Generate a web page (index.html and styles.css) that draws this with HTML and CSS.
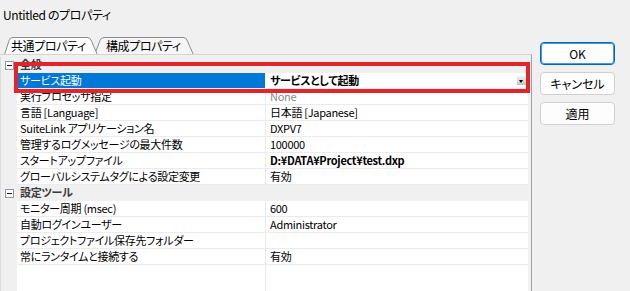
FILE: index.html
```html
<!DOCTYPE html>
<html lang="ja">
  <head>
    <meta charset="UTF-8" />
    <title>Untitled のプロパティ</title>
    <link rel="stylesheet" href="styles.css">
  </head>
  <body>
    <div class="title">Untitled のプロパティ</div>
    <div class="main">
      <div class="sheet">
        <div class="tabs">
          <div class="tab active">
            <svg width="94" height="18" viewBox="0 0 94 18">
              <path d="M0.5,18 L5,3.5 Q6,0.5 9,0.5 L83,0.5 Q86,0.5 87,3 L93.5,18" fill="#fdfdfd" stroke="#8c8c8c" />
            </svg>
            <span>共通プロパティ</span>
          </div>
          <div class="tab other">
            <svg width="100" height="18" viewBox="0 0 100 18">
              <path d="M0.5,18 L6,3.5 Q7,0.5 10,0.5 L89,0.5 Q92,0.5 93,3 L99.5,18" fill="#f6f6f6" stroke="#8c8c8c" />
            </svg>
            <span>構成プロパティ</span>
          </div>
        </div>
        <div class="panel">
          <div class="grid">
            <div class="row cat">
              <div class="gutter"><span class="toggle"></span></div>
              <div class="label">全般</div>
            </div>
            <div class="row">
              <div class="gutter"></div>
              <div class="name sel">サービス起動</div>
              <div class="value combo"><b>サービスとして起動</b><span class="drop"></span></div>
            </div>
            <div class="row">
              <div class="gutter"></div>
              <div class="name">実行プロセッサ指定</div>
              <div class="value muted">None</div>
            </div>
            <div class="row">
              <div class="gutter"></div>
              <div class="name">言語 [Language]</div>
              <div class="value">日本語 [Japanese]</div>
            </div>
            <div class="row">
              <div class="gutter"></div>
              <div class="name">SuiteLink アプリケーション名</div>
              <div class="value">DXPV7</div>
            </div>
            <div class="row">
              <div class="gutter"></div>
              <div class="name">管理するログメッセージの最大件数</div>
              <div class="value">100000</div>
            </div>
            <div class="row">
              <div class="gutter"></div>
              <div class="name">スタートアップファイル</div>
              <div class="value"><b>D:¥DATA¥Project¥test.dxp</b></div>
            </div>
            <div class="row">
              <div class="gutter"></div>
              <div class="name">グローバルシステムタグによる設定変更</div>
              <div class="value">有効</div>
            </div>
            <div class="row cat">
              <div class="gutter"><span class="toggle"></span></div>
              <div class="label">設定ツール</div>
            </div>
            <div class="row">
              <div class="gutter"></div>
              <div class="name">モニター周期 (msec)</div>
              <div class="value">600</div>
            </div>
            <div class="row">
              <div class="gutter"></div>
              <div class="name">自動ログインユーザー</div>
              <div class="value">Administrator</div>
            </div>
            <div class="row">
              <div class="gutter"></div>
              <div class="name">プロジェクトファイル保存先フォルダー</div>
              <div class="value"></div>
            </div>
            <div class="row">
              <div class="gutter"></div>
              <div class="name">常にランタイムと接続する</div>
              <div class="value">有効</div>
            </div>
            <div class="row filler">
              <div class="gutter"></div>
              <div class="name"></div>
              <div class="value"></div>
            </div>
            <div class="highlight"></div>
          </div>
        </div>
      </div>
      <div class="buttons">
        <button class="default">OK</button>
        <button>キャンセル</button>
        <button>適用</button>
      </div>
    </div>
  </body>
</html>
```

FILE: styles.css
```css
/* Base */
* {
  box-sizing: border-box;
  margin: 0;
  padding: 0;
}

body {
  width: 630px;
  height: 291px;
  overflow: hidden;
  background-color: #f0f0f0;
  color: #000;
  font-family: "Noto Sans CJK JP", "Noto Sans", sans-serif;
  font-feature-settings: "palt";
}

/* Title */
.title {
  height: 37px;
  padding: 8px 0 0 3px;
  font-size: 12px;
  line-height: 14px;
  letter-spacing: -0.4px;
}

.main {
  display: flex;
  height: 254px;
}

/* Tabs */
.sheet {
  width: 532px;
  display: flex;
  flex-direction: column;
}

.tabs {
  display: flex;
  height: 17px;
  padding-left: 4px;
}

.tab {
  position: relative;
  height: 17px;
  font-size: 12px;
  line-height: 17px;
  letter-spacing: -0.4px;
}

.tab svg {
  position: absolute;
  left: 0;
  top: 0;
}

.tab span {
  position: relative;
}

.tab.active {
  width: 94px;
  padding-left: 7px;
  z-index: 2;
}

.tab.other {
  width: 100px;
  margin-left: -4px;
  padding-left: 12px;
  z-index: 1;
}

/* Property grid */
.panel {
  flex: 1;
  border-top: 1px solid #d5d5d5;
  border-right: 1px solid #a0a0a0;
  padding: 2px 3px 0 0;
  position: relative;
  z-index: 3;
}

.grid {
  position: relative;
  height: 100%;
  display: flex;
  flex-direction: column;
  font-size: 11px;
  letter-spacing: -0.3px;
}

.row {
  display: flex;
  height: 16px;
  line-height: 15px;
  flex: none;
}

.gutter {
  width: 17px;
  flex: none;
  background-color: #f0f0f0;
  border-left: 1px solid #dcdcdc;
  padding: 4px 0 0 4px;
}

.toggle {
  display: block;
  position: relative;
  width: 9px;
  height: 9px;
  background-color: #fff;
  border: 1px solid #8e99ab;
}

.toggle::after {
  content: "";
  position: absolute;
  left: 1px;
  top: 3px;
  width: 5px;
  height: 1px;
  background-color: #222;
}

.name {
  width: 249px;
  flex: none;
  background-color: #fff;
  border-right: 1px solid #ebebeb;
  border-bottom: 1px solid #ebebeb;
  padding-left: 3px;
  white-space: nowrap;
}

.name.sel {
  background-color: #0078d7;
  color: #fff;
  border-right-color: #fff;
}

.value {
  flex: 1;
  background-color: #fff;
  border-bottom: 1px solid #ebebeb;
  padding-left: 4px;
  white-space: nowrap;
}

.value.muted {
  color: #8a8a8a;
}

.value.combo {
  display: flex;
  align-items: center;
  justify-content: space-between;
  padding-right: 2px;
}

.drop {
  position: relative;
  width: 9px;
  height: 9px;
  background: linear-gradient(#f2f2f2, #c4c4c4);
}

.drop::after {
  content: "";
  position: absolute;
  left: 2px;
  top: 4px;
  border-left: 2.5px solid transparent;
  border-right: 2.5px solid transparent;
  border-top: 3px solid #000;
}

.cat .label {
  flex: 1;
  background-color: #f0f0f0;
  color: #3a3a3a;
  font-weight: bold;
  padding-left: 3px;
}

.row.filler {
  flex: 1;
  height: auto;
}

.filler .name,
.filler .value {
  border-bottom: none;
}

.highlight {
  position: absolute;
  left: 14px;
  top: 5px;
  width: 516px;
  height: 31px;
  border: 4px solid #e3242b;
}

/* Buttons */
.buttons {
  display: flex;
  flex-direction: column;
  gap: 7px;
  margin-left: 8px;
  padding-top: 5px;
}

button {
  width: 75px;
  height: 23px;
  font-family: "Noto Sans CJK JP", "Noto Sans", sans-serif;
  font-feature-settings: "palt";
  font-size: 12px;
  color: #000;
  background-color: #fdfdfd;
  border: 1px solid #d0d0d0;
  border-radius: 4px;
}

button.default {
  border-color: #0067c0;
  box-shadow: inset 0 0 0 1px #4a9ae0;
}
```
